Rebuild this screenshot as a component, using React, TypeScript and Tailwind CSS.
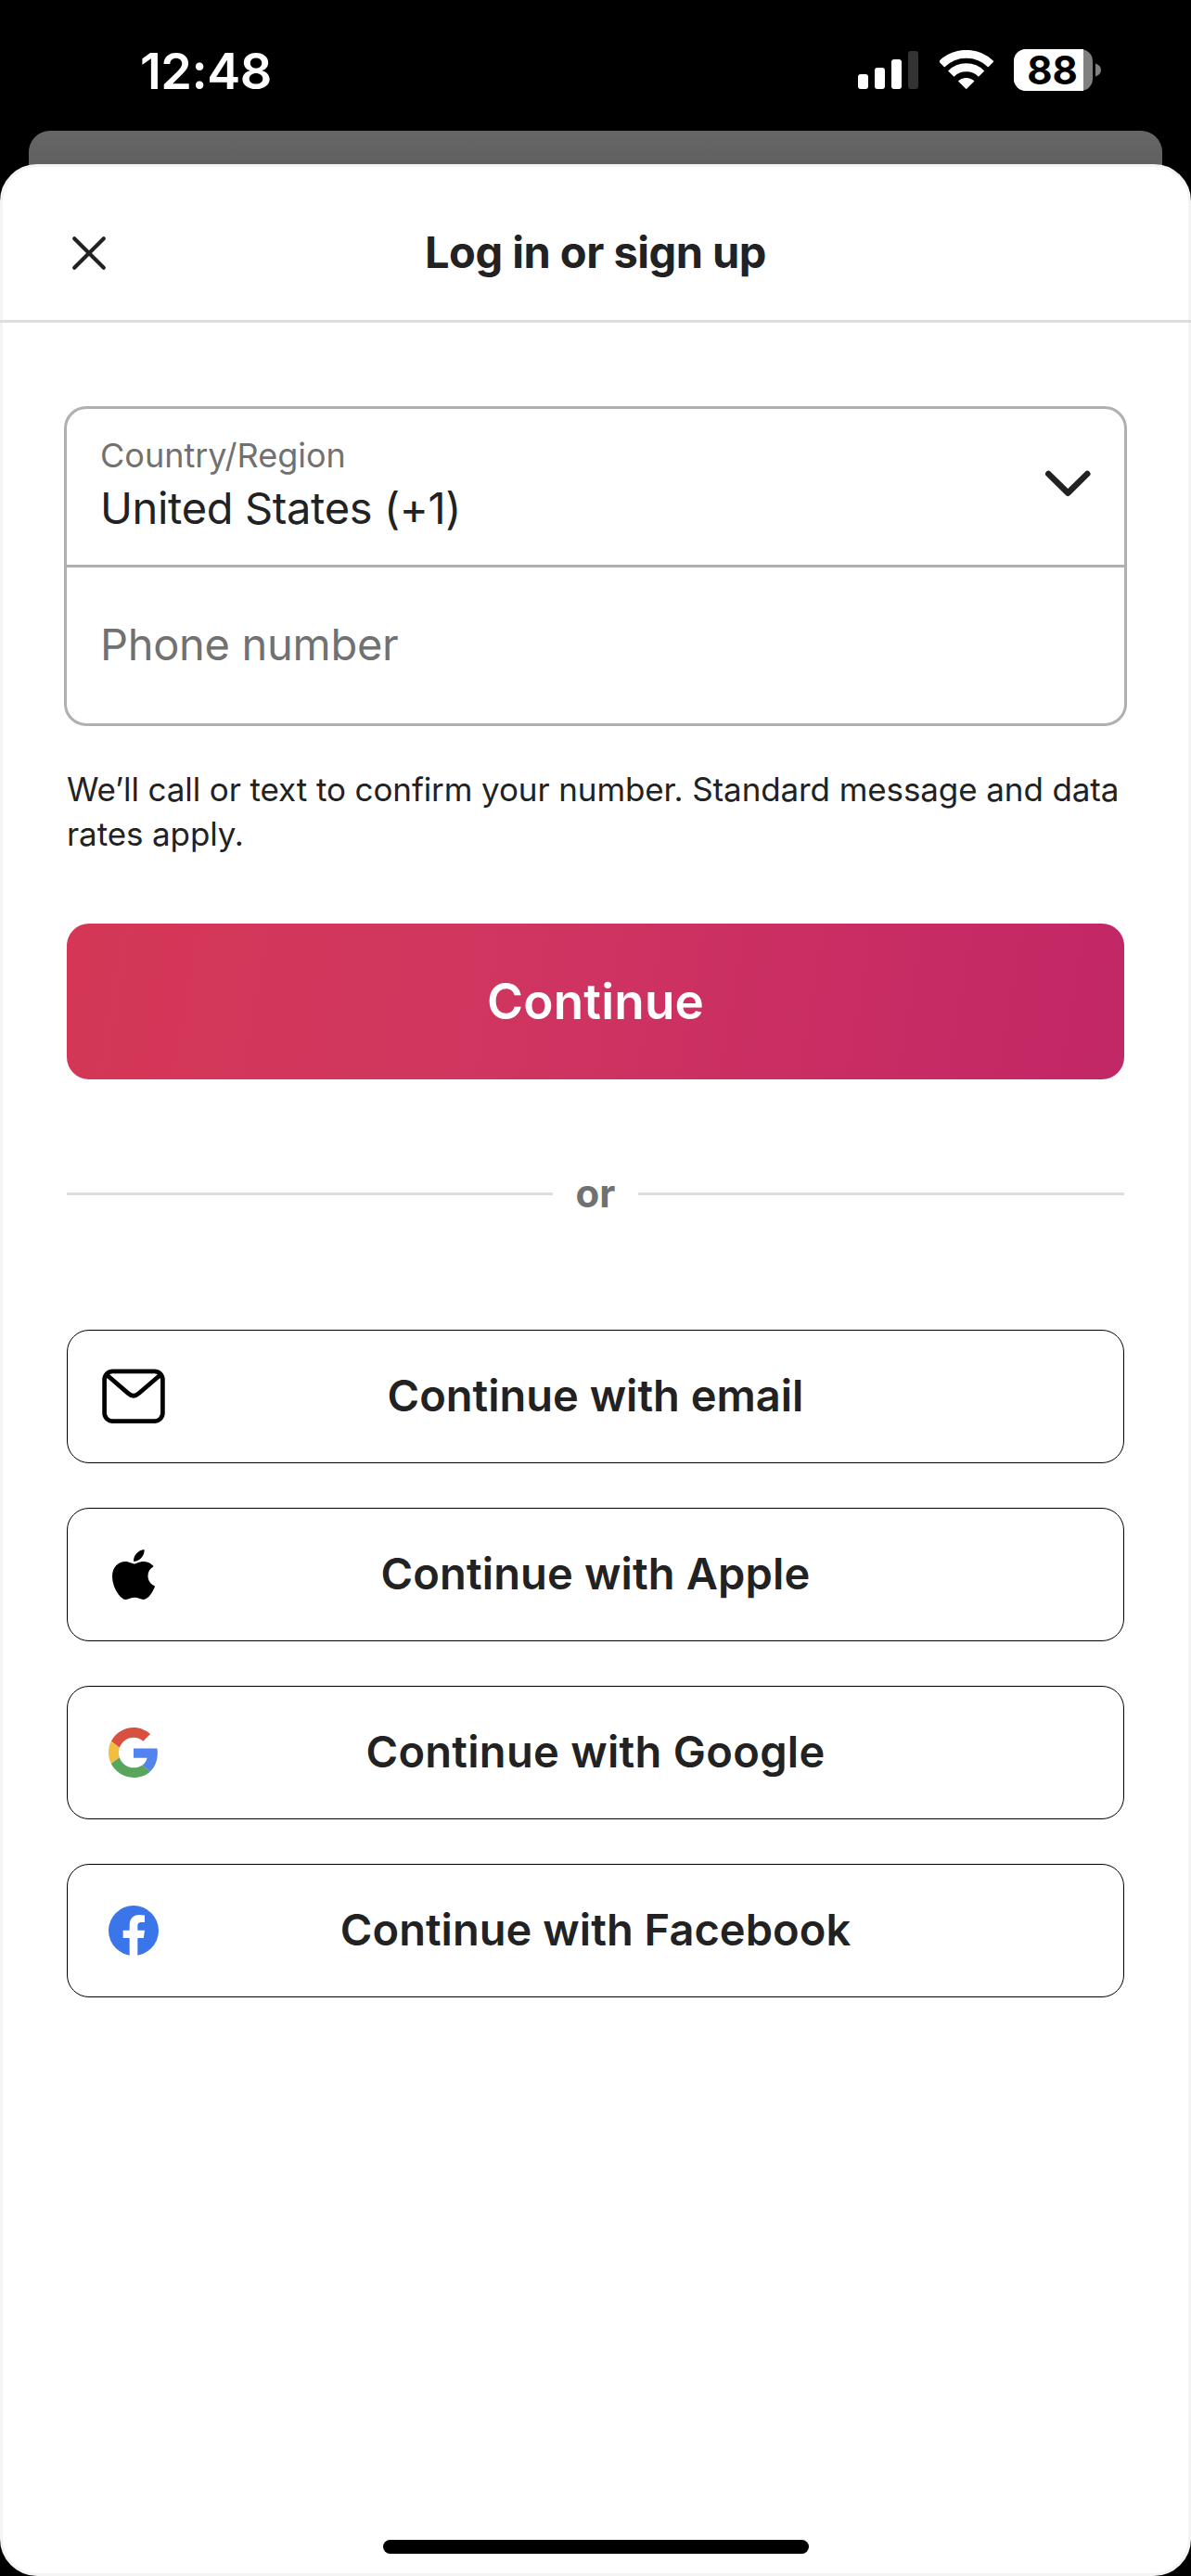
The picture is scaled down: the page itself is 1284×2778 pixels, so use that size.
import type { ReactNode } from 'react';

function SignalIcon() {
  return (
    <div className="flex h-[41px] items-end gap-[7px]">
      <div className="h-4 w-[11px] rounded-[3px] bg-white" />
      <div className="h-[23px] w-[11px] rounded-[3px] bg-white" />
      <div className="h-8 w-[11px] rounded-[3px] bg-white" />
      <div className="h-[41px] w-[11px] rounded-[3px] bg-[#333333]" />
    </div>
  );
}

function WifiIcon() {
  return (
    <svg className="h-[43px] w-[58px]" viewBox="0 0 58 43" fill="none">
      <path d="M2.1 15.3A37.7 37.7 0 0 1 55.4 15.3" stroke="#fff" strokeWidth="8.8" />
      <path d="M12.3 25.6A23.2 23.2 0 0 1 45.1 25.6" stroke="#fff" strokeWidth="9" />
      <path d="M19.9 33.6A12.6 12.6 0 0 1 37.5 33.6L29.4 41.6Q28.7 42.3 28 41.6Z" fill="#fff" />
    </svg>
  );
}

function Battery() {
  return (
    <div className="flex items-center gap-[3px]">
      <div className="flex h-[45px] w-[85px] items-center rounded-[13px] bg-[#808080]">
        <div className="flex h-[45px] w-[75px] items-center justify-center rounded-l-[13px] bg-white pl-[8px] text-[42px] leading-[52px] font-bold text-black">
          88
        </div>
      </div>
      <svg className="h-[15px] w-[6px]" viewBox="0 0 6 15">
        <path d="M0 .5C4 1.8 6 4.4 6 7.5S4 13.2 0 14.5Z" fill="#808080" />
      </svg>
    </div>
  );
}

function MailIcon() {
  return (
    <svg className="mb-px h-[59px] w-[68px]" viewBox="0 0 68 59" fill="none" stroke="#000" strokeWidth="4.7">
      <rect x="2.6" y="2.9" width="62.8" height="53.8" rx="9" />
      <path d="M4.6 6.2L28.2 26.6Q34 31.8 39.8 26.6L63.4 6.2" />
    </svg>
  );
}

function AppleIcon() {
  return (
    <svg className="h-[54px] w-[46px]" viewBox="4 32 376 448" preserveAspectRatio="none">
      <path d="M318.7 268.7c-.2-36.7 16.4-64.4 50-84.8-18.8-26.9-47.2-41.7-84.7-44.6-35.5-2.8-74.3 20.7-88.5 20.7-15 0-49.4-19.7-76.4-19.7C63.3 141.2 4 184.8 4 273.5q0 39.3 14.4 81.2c12.8 36.7 59 126.7 107.2 125.2 25.2-.6 43-17.9 75.8-17.9 31.8 0 48.3 17.9 76.4 17.9 48.6-.7 90.4-82.5 102.6-119.3-65.2-30.7-61.7-90-61.7-91.9zm-56.6-164.2c27.3-32.4 24.8-61.9 24-72.5-24.1 1.4-52 16.4-67.9 34.9-17.5 19.8-27.8 44.3-25.6 71.9 26.1 2 49.9-11.4 69.5-34.3z" />
    </svg>
  );
}

function GoogleIcon() {
  return (
    <svg className="h-[54px] w-[54px]" viewBox="0 0 48 48">
      <path fill="#d85140" d="M24 9.5c3.54 0 6.71 1.22 9.21 3.6l6.85-6.85C35.9 2.38 30.47 0 24 0 14.62 0 6.51 5.38 2.56 13.22l7.98 6.19C12.43 13.72 17.74 9.5 24 9.5z" />
      <path fill="#5383ec" d="M46.98 24.55c0-1.57-.15-3.09-.38-4.55H24v9.02h12.94c-.58 2.96-2.26 5.48-4.78 7.18l7.73 6c4.51-4.18 7.09-10.36 7.09-17.65z" />
      <path fill="#f1be42" d="M10.53 28.59c-.48-1.45-.76-2.99-.76-4.59s.27-3.14.76-4.59l-7.98-6.19C.92 16.46 0 20.12 0 24c0 3.88.92 7.54 2.56 10.78l7.97-6.19z" />
      <path fill="#58a55c" d="M24 48c6.48 0 11.93-2.13 15.89-5.81l-7.73-6c-2.15 1.45-4.92 2.3-8.16 2.3-6.26 0-11.57-4.22-13.47-9.91l-7.98 6.19C6.51 42.62 14.62 48 24 48z" />
    </svg>
  );
}

function FacebookIcon() {
  return (
    <svg className="h-[54px] w-[54px]" viewBox="0 0 162 162">
      <circle cx="81" cy="81" r="81" fill="#3a76e9" />
      <path fill="#fff" d="M68 162V105H47V80H68V64C68 42 80 30 99 30c7 0 13 .6 18 1.500V54H106.500C97 54 94 59 94 66.500V80H117L113.500 105H94V162z" />
    </svg>
  );
}

function ProviderButton({ icon, children, spacing }: { icon: ReactNode; children: ReactNode; spacing: string }) {
  return (
    <button className="grid h-36 w-full grid-cols-[142px_1fr_142px] items-center rounded-[24px] border border-black text-[#222222]">
      <span className="flex justify-center">{icon}</span>
      <span className={`pb-0.5 text-center text-[47px] leading-[60px] font-semibold whitespace-nowrap ${spacing}`}>{children}</span>
    </button>
  );
}

export default function App() {
  return (
    <div className="flex h-[2778px] w-[1284px] flex-col overflow-hidden bg-black font-['Inter',sans-serif]">
      <header className="flex h-[141px] justify-between pt-[53px] pr-[97px] pl-[151px] text-white">
        <div className="h-12 text-[54px] leading-[48px] font-semibold tracking-[-0.5px]">12:48</div>
        <div className="flex h-[45px] items-start">
          <div className="mt-[2px] mr-[23px]"><SignalIcon /></div>
          <div className="mt-[1px] mr-[22px]"><WifiIcon /></div>
          <Battery />
        </div>
      </header>

      <div className="mx-[31px] h-[86px] shrink-0 rounded-t-[23px] bg-linear-to-b from-[#666666] to-[#585858]" />

      <main className="relative -mt-[50px] flex flex-1 flex-col rounded-[40px] border-[3px] border-[#f4f4f4] bg-white text-[#222222]">
        <div className="-mx-[3px] grid h-[168px] shrink-0 grid-cols-[156px_1fr_156px] items-center border-b-[3px] border-[#dddddd] pt-[20px]">
          <button className="pl-[77px]">
            <svg className="h-[38px] w-[38px]" viewBox="0 0 38 38" fill="none" stroke="#222" strokeWidth="4.2" strokeLinecap="round">
              <path d="M3.200 3.200L34.800 34.800M34.800 3.200L3.200 34.800" />
            </svg>
          </button>
          <h1 className="pb-px text-center text-[47px] leading-[60px] font-bold tracking-[-0.5px]">Log in or sign up</h1>
        </div>

        <div className="flex flex-1 flex-col px-[69px] pt-[90px]">
          <div className="-mx-[3px] h-[345px] w-[1146px] rounded-[24px] border-[3px] border-[#b0b0b0]">
            <div className="flex h-[171px] items-start justify-between border-b-[3px] border-[#b0b0b0] pr-[36px] pl-[36px]">
              <div className="pt-[26px]">
                <div className="text-[36px] leading-[48px] text-[#717171]">Country/Region</div>
                <div className="pt-[3px] text-[47px] leading-[60px] tracking-[-0.35px]">United States (+1)</div>
              </div>
              <svg className="mt-[66px] h-[30px] w-[50px]" viewBox="0 0 50 30" fill="none" stroke="#222" strokeWidth="6.6" strokeLinecap="round" strokeLinejoin="round">
                <path d="M4.300 4L25.300 24.700L46.200 4" />
              </svg>
            </div>
            <div className="flex h-[168px] items-center pb-[2px] pl-[36px] text-[47px] leading-[60px] tracking-[-0.3px] text-[#717171]">
              <span>Phone number</span>
            </div>
          </div>

          <p className="mt-[44px] text-[35px] leading-[48px] tracking-[-0.1px] whitespace-nowrap">
            We’ll call or text to confirm your number. Standard message and data
            <br />
            rates apply.
          </p>

          <button className="mt-[73px] h-[168px] w-full rounded-[24px] bg-linear-[100deg,#d43755_0%,#d13660_38%,#c92d63_72%,#c22766_100%] pt-[2px] text-[53px] font-semibold tracking-[0.2px] text-white">
            Continue
          </button>

          <div className="mt-[93px] flex h-[60px] items-center">
            <div className="h-[3px] flex-1 bg-[#dddddd]" />
            <span className="w-[92px] text-center text-[42px] leading-[60px] font-bold text-[#717171]">or</span>
            <div className="h-[3px] flex-1 bg-[#dddddd]" />
          </div>

          <div className="mt-[117px] flex flex-col gap-12">
            <ProviderButton icon={<MailIcon />} spacing="tracking-[0px]">
              Continue with email
            </ProviderButton>
            <ProviderButton icon={<AppleIcon />} spacing="tracking-[0.15px]">
              Continue with Apple
            </ProviderButton>
            <ProviderButton icon={<GoogleIcon />} spacing="tracking-[0.3px]">
              Continue with Google
            </ProviderButton>
            <ProviderButton icon={<FacebookIcon />} spacing="tracking-[0.05px]">
              Continue with Facebook
            </ProviderButton>
          </div>

          <div className="mt-auto mb-[21px] h-[15px] w-[459px] self-center rounded-full bg-black" />
        </div>
      </main>
    </div>
  );
}
